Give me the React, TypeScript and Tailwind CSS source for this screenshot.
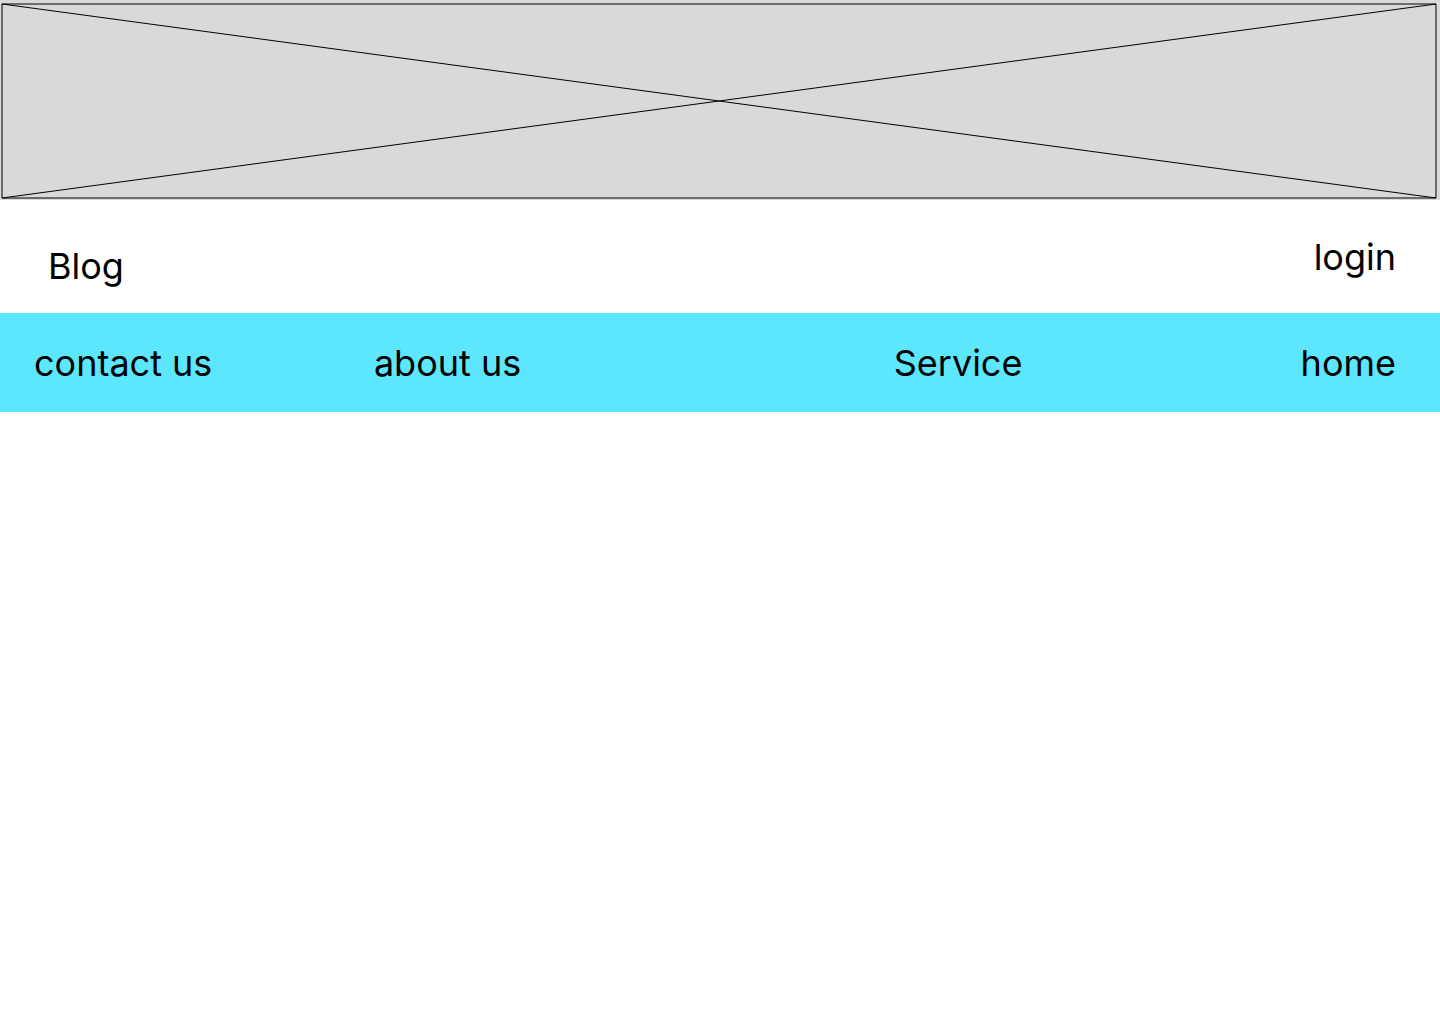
export default function App() {
  return (
    <div className="min-h-screen bg-white font-['Inter',sans-serif] text-4xl leading-[44px] text-black">
      <header>
        <div className="bg-[#d9d9d9] pt-[3px] pr-[3px] pb-px pl-px">
          <svg
            className="block h-[196px] w-full"
            viewBox="0 0 1436 196"
            preserveAspectRatio="none"
            fill="none"
            stroke="black"
            role="img"
            aria-label="Banner"
          >
            <path d="M1 1H1435V195H1Z M1 1L1435 195 M1 195L1435 1" />
          </svg>
        </div>
        <div className="flex items-start justify-between pt-[35px] pr-11 pb-[25px] pl-12">
          <a href="#blog" className="mt-[9px]">Blog</a>
          <a href="#login">login</a>
        </div>
        <nav className="grid grid-cols-[340fr_520fr_407fr_auto] items-center bg-[#5ce7ff] pt-7 pr-11 pb-[27px] pl-[34px]">
          <a href="#contact">contact us</a>
          <a href="#about">about us</a>
          <a href="#service">Service</a>
          <a href="#home">home</a>
        </nav>
      </header>
    </div>
  );
}
